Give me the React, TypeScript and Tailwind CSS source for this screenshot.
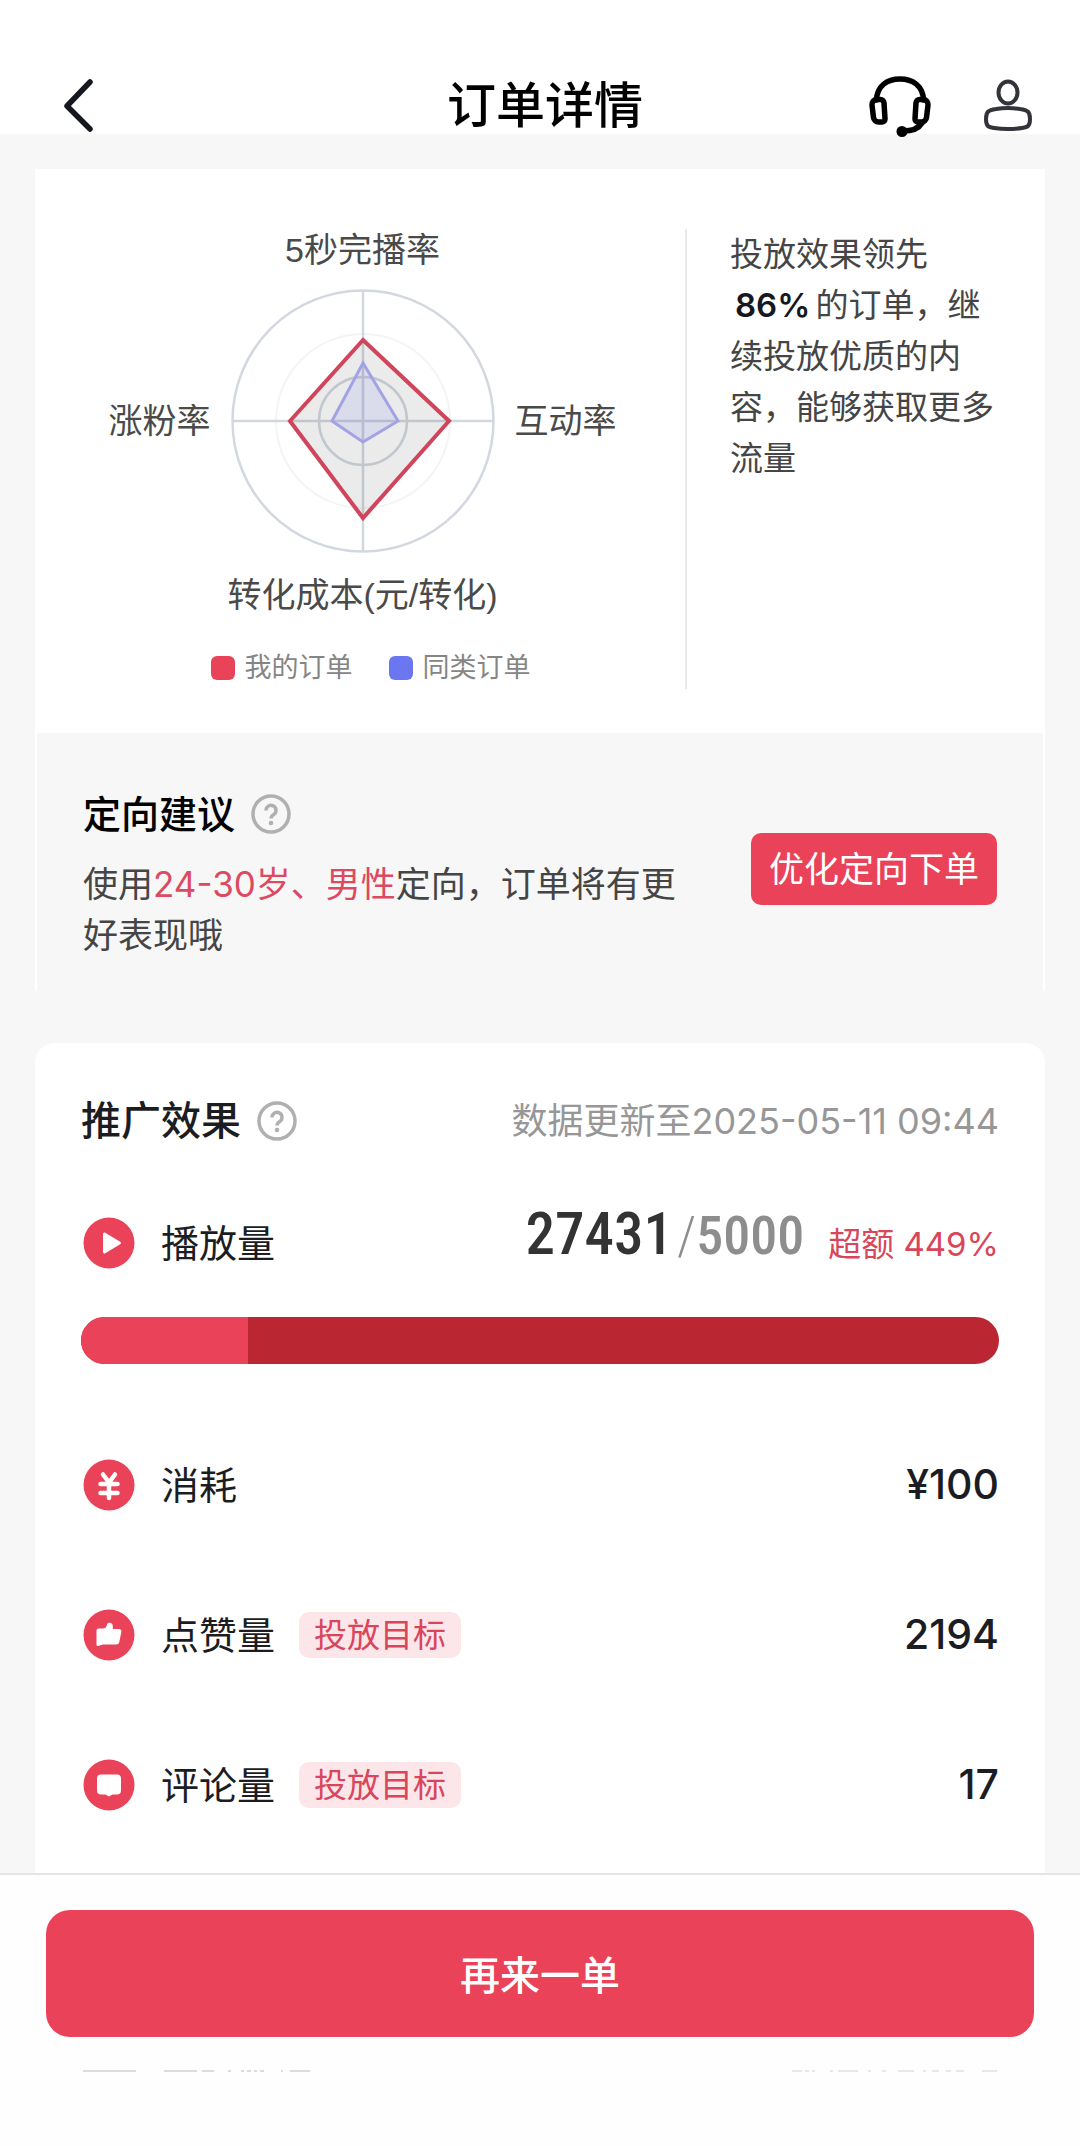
import React from 'react';

const FONT = 'font-[Inter,"Noto_Sans_CJK_SC",sans-serif]';

function BackIcon() {
  return (
    <svg viewBox="0 0 32 56" className="h-14 w-8" fill="none" stroke="#16181f" strokeWidth="5.500" strokeLinecap="round" strokeLinejoin="round">
      <path d="M28 4 5 28l23 23" />
    </svg>
  );
}

function HeadsetIcon() {
  return (
    <svg viewBox="0 0 64 64" className="size-16" fill="none" stroke="#000" strokeWidth="5.500" strokeLinecap="round" strokeLinejoin="round">
      <path d="M8.500 26C9 12 19 5 32 5s23 7 23.500 21" />
      <path d="M8.500 25.500h4a3.500 3.500 0 0 1 3.500 3.300l1 16a3 3 0 0 1-3 3.200h-3.500a5 5 0 0 1-5-4.500L4 31a5 5 0 0 1 4.500-5.500Z" />
      <path d="M55.500 25.500h-4a3.500 3.500 0 0 0-3.500 3.300l-1 16a3 3 0 0 0 3 3.200h3.500a5 5 0 0 0 5-4.500L60 31a5 5 0 0 0-4.500-5.500Z" />
      <path d="M54 49c-3 5-8 8-19 8" />
      <circle cx="34" cy="57.500" r="2.800" fill="#000" />
    </svg>
  );
}

function UserIcon() {
  return (
    <svg viewBox="0 0 56 56" className="size-14" fill="none" stroke="#33343a" strokeWidth="4">
      <ellipse cx="28" cy="14.500" rx="9.500" ry="11" />
      <path d="M6 41c0-7 2-9 10-10 8-1.300 16-1.300 24 0 8 1 10 3 10 10s-2 8-8 9c-9 1.300-19 1.300-28 0-6-1-8-2-8-9Z" />
    </svg>
  );
}

function HelpButton({ label }) {
  return (
    <button aria-label={label} className="size-10">
      <svg viewBox="0 0 40 40" className="size-10" fill="none" stroke="#b0b0b0" strokeWidth="3.500">
        <circle cx="20" cy="20" r="18" />
        <path d="M15 16.500a5 5 0 1 1 7.800 4c-2 1.300-2.800 2-2.800 4" />
        <circle cx="20" cy="29" r="2.300" fill="#b0b0b0" stroke="none" />
      </svg>
    </button>
  );
}

const GLYPHS = {
  play: <path d="M20 17v18a1.500 1.500 0 0 0 2.200 1.300l15-9a1.500 1.500 0 0 0 0-2.600l-15-9A1.500 1.500 0 0 0 20 17Z" fill="#fff" />,
  yuan: <path d="m20 15.500 6 8 6-8M17.500 25h17M17.500 34h17M26 24v15" stroke="#fff" strokeWidth="4.500" strokeLinecap="round" strokeLinejoin="round" fill="none" />,
  like: (
    <path d="M15.500 19.500H20c2 0 3-1 3.500-2.500l.800-2c1-2.300 5.500-1.300 5.500 2v3h6q3 0 2.500 3l-2 10q-.500 2.500-3 2.500H20l-5 1.500q-1.500 0-1.500-1.500V21.500q0-2 2-2Z" fill="#fff" />
  ),
  comment: <path d="M18 15.500h16q4 0 4 4v12q0 4-4 4h-4.500L26 37.500l-3.500-2H18q-4 0-4-4v-12q0-4 4-4Z" fill="#fff" />,
};

function MetricIcon({ name }) {
  return (
    <svg viewBox="0 0 52 52" className="size-[52px]">
      <circle cx="26" cy="26" r="25.500" fill="#ea4359" />
      {GLYPHS[name]}
    </svg>
  );
}

function RadarChart() {
  return (
    <svg viewBox="0 0 264 264" className="size-[264px]" fill="none">
      <circle cx="132" cy="132" r="87" stroke="#f4f4f6" strokeWidth="2" />
      <g stroke="#d3d8e0" strokeWidth="2.500">
        <circle cx="132" cy="132" r="130.500" />
        <circle cx="132" cy="132" r="44" />
        <path d="M132 1v262M1 132h262" />
      </g>
      <path d="M132 51 218 132 132 229 59 132Z" fill="#000" fillOpacity=".08" stroke="#d0455c" strokeWidth="4" />
      <path d="M132 74 167 132 132 153 101 132Z" fill="#6b77f0" fillOpacity=".12" stroke="#a3a3e3" strokeWidth="3" />
    </svg>
  );
}

function OverviewCard() {
  return (
    <section className="border-x-2 border-white bg-[#f7f7f7]">
      <div className="flex bg-white pt-[60px] pb-11">
        <div className="flex flex-1 flex-col items-center pl-[3px] font-['Liberation_Sans','Noto_Sans_CJK_SC',sans-serif] text-[34px] leading-[42px] text-[#4a4a4a]">
          <div>5秒完播率</div>
          <div className="flex items-center gap-5 pt-[18px] pb-[21px]">
            <span>涨粉率</span>
            <RadarChart />
            <span>互动率</span>
          </div>
          <div>转化成本(元/转化)</div>
          <ul className="flex gap-9 pt-[31px] pl-4 text-[27px] text-[#858585]">
            <li className="flex items-center gap-[10px]"><i className="size-6 rounded-md bg-[#e94359]" />我的订单</li>
            <li className="flex items-center gap-[10px]"><i className="size-6 rounded-md bg-[#6b77f0]" />同类订单</li>
          </ul>
        </div>
        <div className="w-[358px] border-l-2 border-[#e9e9e9] pl-[43px]">
          <p className="w-[268px] text-[33px] leading-[51px] text-[#454545]">
            投放效果领先 <strong className="mx-[5px] inline-block font-semibold text-[#16181f]">86%</strong>的订单，继续投放优质的内容，能够获取更多流量
          </p>
        </div>
      </div>
      <div className="flex items-center px-[46px] pt-14 pb-[30px]">
        <div className="flex-1">
          <div className="flex items-center gap-4">
            <h2 className="text-[38px] leading-[50px] font-medium text-black">定向建议</h2>
            <HelpButton label="定向建议说明" />
          </div>
          <p className="mt-5 w-[610px] text-[35px] leading-[51px] text-[#454545]">
            使用<span className="text-[#dc4a61]">24-30岁、男性</span>定向，订单将有更好表现哦
          </p>
        </div>
        <button className="mb-3 h-[72px] rounded-[10px] bg-[#ea4359] px-[18px] text-[35px] text-white">优化定向下单</button>
      </div>
    </section>
  );
}

function MetricRow({ icon, name, value, target = false }) {
  return (
    <li className="flex h-[150px] items-center pl-[2px]">
      <MetricIcon name={icon} />
      <span className="ml-[26px] text-[38px]">{name}</span>
      {target && <span className="ml-6 rounded-[10px] bg-[#fce6e9] px-[15px] text-[33px] leading-[46px] text-[#d9455a]">投放目标</span>}
      <span className="ml-auto text-[41px] font-medium">{value}</span>
    </li>
  );
}

function EffectCard() {
  const done = 27431;
  const goal = 5000;
  return (
    <section className="flex-1 rounded-t-[20px] bg-white px-[46px] pt-[50px] text-[#1b1d22]">
      <div className="flex items-center">
        <h2 className="text-[40px] leading-[56px] font-medium">推广效果</h2>
        <div className="ml-4 flex"><HelpButton label="推广效果说明" /></div>
        <time className="ml-auto text-[36px] text-[#979797]">数据更新至2025-05-11 09:44</time>
      </div>
      <div className="mt-[68px] flex h-[52px] items-center pl-[2px]">
        <MetricIcon name="play" />
        <span className="ml-[26px] text-[38px]">播放量</span>
        <div className="ml-auto flex items-baseline pb-4 font-['Roboto_Condensed','Noto_Sans_CJK_SC',sans-serif] leading-[60px] font-medium">
          <span className="text-[59px] text-[#333]">{done}</span>
          <span className="ml-1 text-[54px] text-[#8d8d8d]"><span className="font-light">/</span>{goal}</span>
        </div>
        <span className="ml-6 pt-1 text-[33px] text-[#d9455a]">超额 449%</span>
      </div>
      <div className="mt-12 h-[47px] overflow-hidden rounded-full bg-[#ba2631]">
        <div className="h-full bg-[#ea4359]" style={{ width: `${(goal / done) * 100}%` }} />
      </div>
      <ul className="mt-[46px]">
        <MetricRow icon="yuan" name="消耗" value="¥100" />
        <MetricRow icon="like" name="点赞量" value="2194" target />
        <MetricRow icon="comment" name="评论量" value="17" target />
      </ul>
    </section>
  );
}

function RowSliver() {
  return (
    <div className="mt-[33px] flex justify-between px-9" aria-hidden="true">
      <svg viewBox="0 0 228 2" className="h-[2px] w-[228px]" stroke="#dcdcdc" strokeWidth="2">
        <path d="M1 1h53M82 1h33M120 1h12M146 1h3M159 1h3M165 1h4M172 1h3M178 1h4M199 1h2M208 1h20" />
      </svg>
      <svg viewBox="0 0 208 2" className="h-[2px] w-[208px]" stroke="#e8e8e8" strokeWidth="2">
        <path d="M2 1h10M15 1h4M22 1h3M40 1h3M48 1h20M78 1h3M92 1h4M108 1h16M133 1h3M142 1h7M156 1h5M166 1h8M192 1h15" />
      </svg>
    </div>
  );
}

export default function App() {
  return (
    <div className={`flex min-h-screen flex-col bg-[#f7f7f7] ${FONT}`}>
      <header className="flex h-[134px] items-center bg-white px-[46px] pt-[77px]">
        <div className="flex flex-1 pl-2"><button aria-label="返回" className="ml-2"><BackIcon /></button></div>
        <h1 className="text-[49px] leading-[60px] font-medium text-black">订单详情</h1>
        <div className="-mr-[2px] flex flex-1 items-center justify-end gap-12">
          <button aria-label="客服"><HeadsetIcon /></button>
          <button aria-label="我的"><UserIcon /></button>
        </div>
      </header>
      <main className="flex flex-1 flex-col gap-[52px] px-[35px] pt-[35px]">
        <OverviewCard />
        <EffectCard />
      </main>
      <footer className="border-t-2 border-[#e5e5e5] bg-[#fefefe] px-[46px] pt-[35px] pb-[74px]">
        <button className="h-[127px] w-full rounded-[24px] bg-[#ea4359] pt-1 text-[40px] font-medium text-white">再来一单</button>
        <RowSliver />
      </footer>
    </div>
  );
}
